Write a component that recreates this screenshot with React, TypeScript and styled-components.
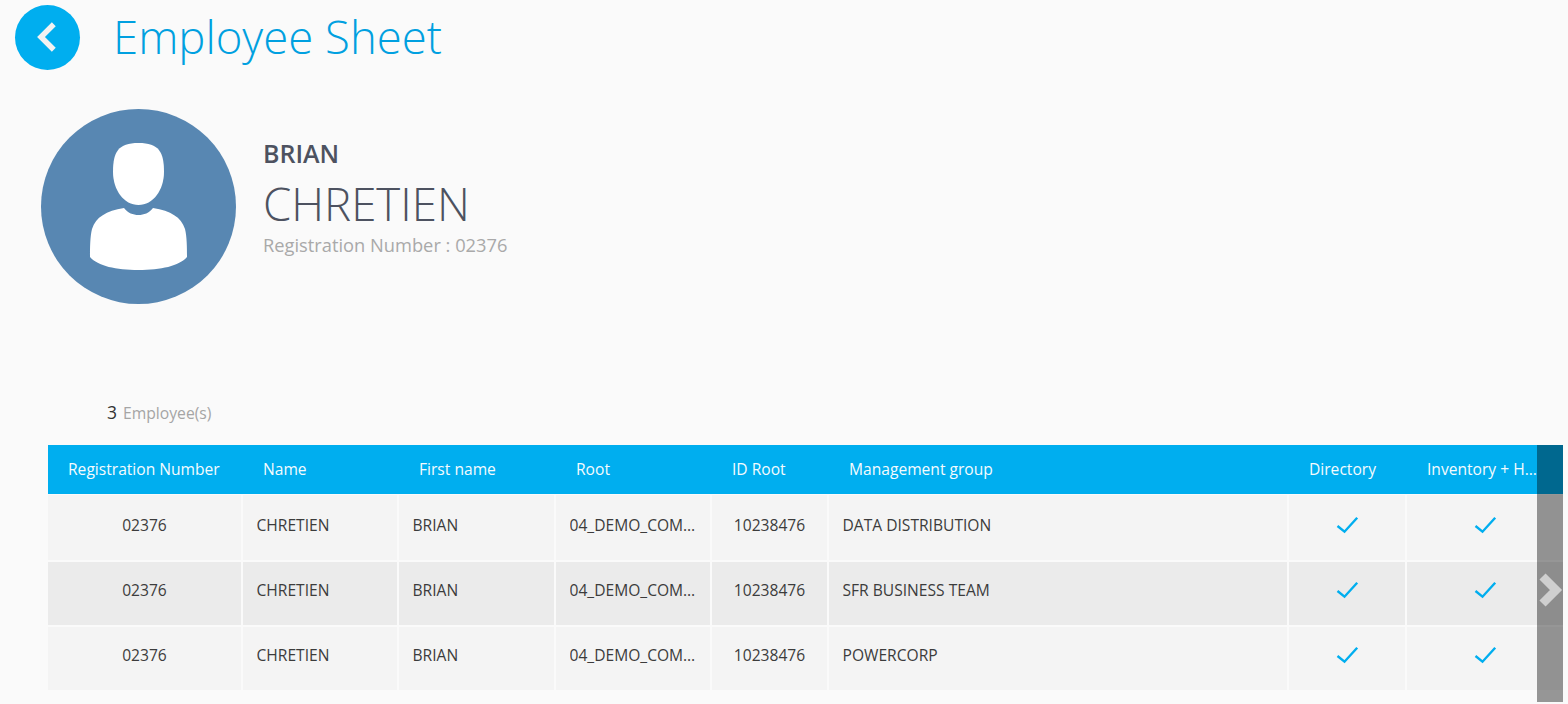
import React from 'react';
import styled, { createGlobalStyle } from 'styled-components';

const GlobalStyle = createGlobalStyle`
  html, body {
    margin: 0;
    padding: 0;
    background: #fafafa;
    font-family: "Open Sans", "Liberation Sans", sans-serif;
  }
  * {
    box-sizing: border-box;
  }
`;

const Page = styled.div`
  width: 1568px;
  height: 704px;
  overflow: hidden;
  padding-top: 5px;
`;

const Header = styled.header`
  display: flex;
  align-items: center;
  gap: 33px;
  padding-left: 15px;
  height: 65px;
`;

const BackButton = styled.button`
  width: 65px;
  height: 65px;
  padding: 0;
  border: none;
  border-radius: 50%;
  background: #00aeef;
  display: flex;
  align-items: center;
  justify-content: center;
`;

const Title = styled.h1`
  margin: 0;
  color: #00a0e0;
  font-size: 45.5px;
  font-weight: 300;
  line-height: 65px;
  position: relative;
  top: -1px;
`;

const Profile = styled.section`
  display: flex;
  gap: 27px;
  padding: 39px 0 0 41px;
`;

const Avatar = styled.div`
  width: 195px;
  height: 195px;
  border-radius: 50%;
  background: #5887b2;
`;

const Identity = styled.div`
  display: flex;
  flex-direction: column;
  padding-top: 27px;
`;

const FirstName = styled.div`
  color: #4d5260;
  font-size: 25px;
  font-weight: 600;
  line-height: 34px;
`;

const LastName = styled.div`
  color: #4d5260;
  font-size: 45.6px;
  font-weight: 300;
  line-height: 60px;
  margin-top: 3px;
`;

const Registration = styled.div`
  color: #a9a9a9;
  font-size: 18.3px;
  line-height: 24px;
`;

const Counter = styled.div`
  display: flex;
  align-items: baseline;
  gap: 6px;
  padding-left: 107px;
  margin-top: 96px;
  height: 24px;
  line-height: 24px;
`;

const Count = styled.span`
  color: #333;
  font-size: 17.5px;
`;

const CountLabel = styled.span`
  color: #a5a5a5;
  font-size: 15.7px;
`;

const TableWrap = styled.div`
  position: relative;
  margin: 21px 0 0 48px;
  width: 1515px;
  height: 257px;
`;

const columns = '193px 154px 155px 154px 115px 458px 116px 156px';

const HeadRow = styled.div`
  display: grid;
  grid-template-columns: ${columns};
  column-gap: 2px;
  height: 49px;
  margin-bottom: 1px;
  background: #00aeef;
`;

const HeadCell = styled.div`
  padding: 0 20px;
  color: #f4fbfe;
  font-size: 15.6px;
  line-height: 49px;
  white-space: nowrap;
  overflow: hidden;
  text-overflow: ellipsis;

  &:last-child {
    padding-right: 26px;
  }
`;

const Row = styled.div<{ $first: boolean; $shaded: boolean }>`
  display: grid;
  grid-template-columns: ${columns};
  column-gap: 2px;
  height: 65px;
  border-top: ${(p) => (p.$first ? 'none' : '2px solid #fafafa')};

  & > div {
    background: ${(p) => (p.$shaded ? '#ebebeb' : '#f4f4f4')};
    padding-bottom: ${(p) => (p.$first ? '5px' : '7px')};
  }
`;

const Cell = styled.div<{ $center?: boolean }>`
  display: flex;
  align-items: center;
  justify-content: ${(p) => (p.$center ? 'center' : 'flex-start')};
  padding: 0 13.5px;
  color: #3c3c3c;
  font-size: 15.6px;
  min-width: 0;
`;

const CellText = styled.span`
  white-space: nowrap;
  overflow: hidden;
  text-overflow: ellipsis;
`;

const ScrollOverlay = styled.div`
  position: absolute;
  top: 0;
  right: 0;
  width: 26px;
  height: 257px;
  padding-top: 127px;
  background: rgba(0, 0, 0, 0.4);
  overflow: hidden;
`;

const Check = () => (
  <svg width="24" height="18" viewBox="0 0 24 18" fill="none">
    <path d="M2.5 10 L9.5 15.7 L22.2 1.7" stroke="#00aeef" strokeWidth="2.4" />
  </svg>
);

const groups = ['DATA DISTRIBUTION', 'SFR BUSINESS TEAM', 'POWERCORP'];

const headers = [
  'Registration Number',
  'Name',
  'First name',
  'Root',
  'ID Root',
  'Management group',
  'Directory',
  'Inventory + Hardware'
];

export default function App() {
  return (
    <Page>
      <GlobalStyle />
      <Header>
        <BackButton aria-label="Back">
          <svg width="65" height="65" viewBox="0 0 65 65" fill="none">
            <path d="M38.8 19.2 L26 32 L38.8 44.8" stroke="#f2f2f2" strokeWidth="5.5" />
          </svg>
        </BackButton>
        <Title>Employee Sheet</Title>
      </Header>

      <Profile>
        <Avatar>
          <svg width="195" height="195" viewBox="0 0 195 195">
            <path
              fill="#fff"
              d="M72 63 C72 43 77 34 97.5 34 C118 34 123 43 123 63 C123 81 112 96 97.5 96 C83 96 72 81 72 63 Z"
            />
            <path
              fill="#fff"
              d="M83 99 C87 104 92 106 97.5 106 C103 106 108 104 112 99 C130 102 140 108 144 120 C146 128 146 140 146 148 C138 157 120 161 97.5 161 C75 161 57 157 49 148 C49 140 49 128 51 120 C55 108 65 102 83 99 Z"
            />
          </svg>
        </Avatar>
        <Identity>
          <FirstName>BRIAN</FirstName>
          <LastName>CHRETIEN</LastName>
          <Registration>Registration Number : 02376</Registration>
        </Identity>
      </Profile>

      <Counter>
        <Count>3</Count>
        <CountLabel>Employee(s)</CountLabel>
      </Counter>

      <TableWrap>
        <HeadRow>
          {headers.map((h) => (
            <HeadCell key={h}>{h}</HeadCell>
          ))}
        </HeadRow>
        {groups.map((group, i) => (
          <Row key={group} $first={i === 0} $shaded={i === 1}>
            <Cell $center>
              <CellText>02376</CellText>
            </Cell>
            <Cell>
              <CellText>CHRETIEN</CellText>
            </Cell>
            <Cell>
              <CellText>BRIAN</CellText>
            </Cell>
            <Cell>
              <CellText>04_DEMO_COMPANY</CellText>
            </Cell>
            <Cell $center>
              <CellText>10238476</CellText>
            </Cell>
            <Cell>
              <CellText>{group}</CellText>
            </Cell>
            <Cell $center>
              <Check />
            </Cell>
            <Cell $center>
              <Check />
            </Cell>
          </Row>
        ))}
        <ScrollOverlay>
          <svg width="26" height="36" viewBox="0 0 26 36" fill="none">
            <path d="M5.5 4.5 L19 18 L5.5 31.5" stroke="#cfcfcf" strokeWidth="8.6" />
          </svg>
        </ScrollOverlay>
      </TableWrap>
    </Page>
  );
}
